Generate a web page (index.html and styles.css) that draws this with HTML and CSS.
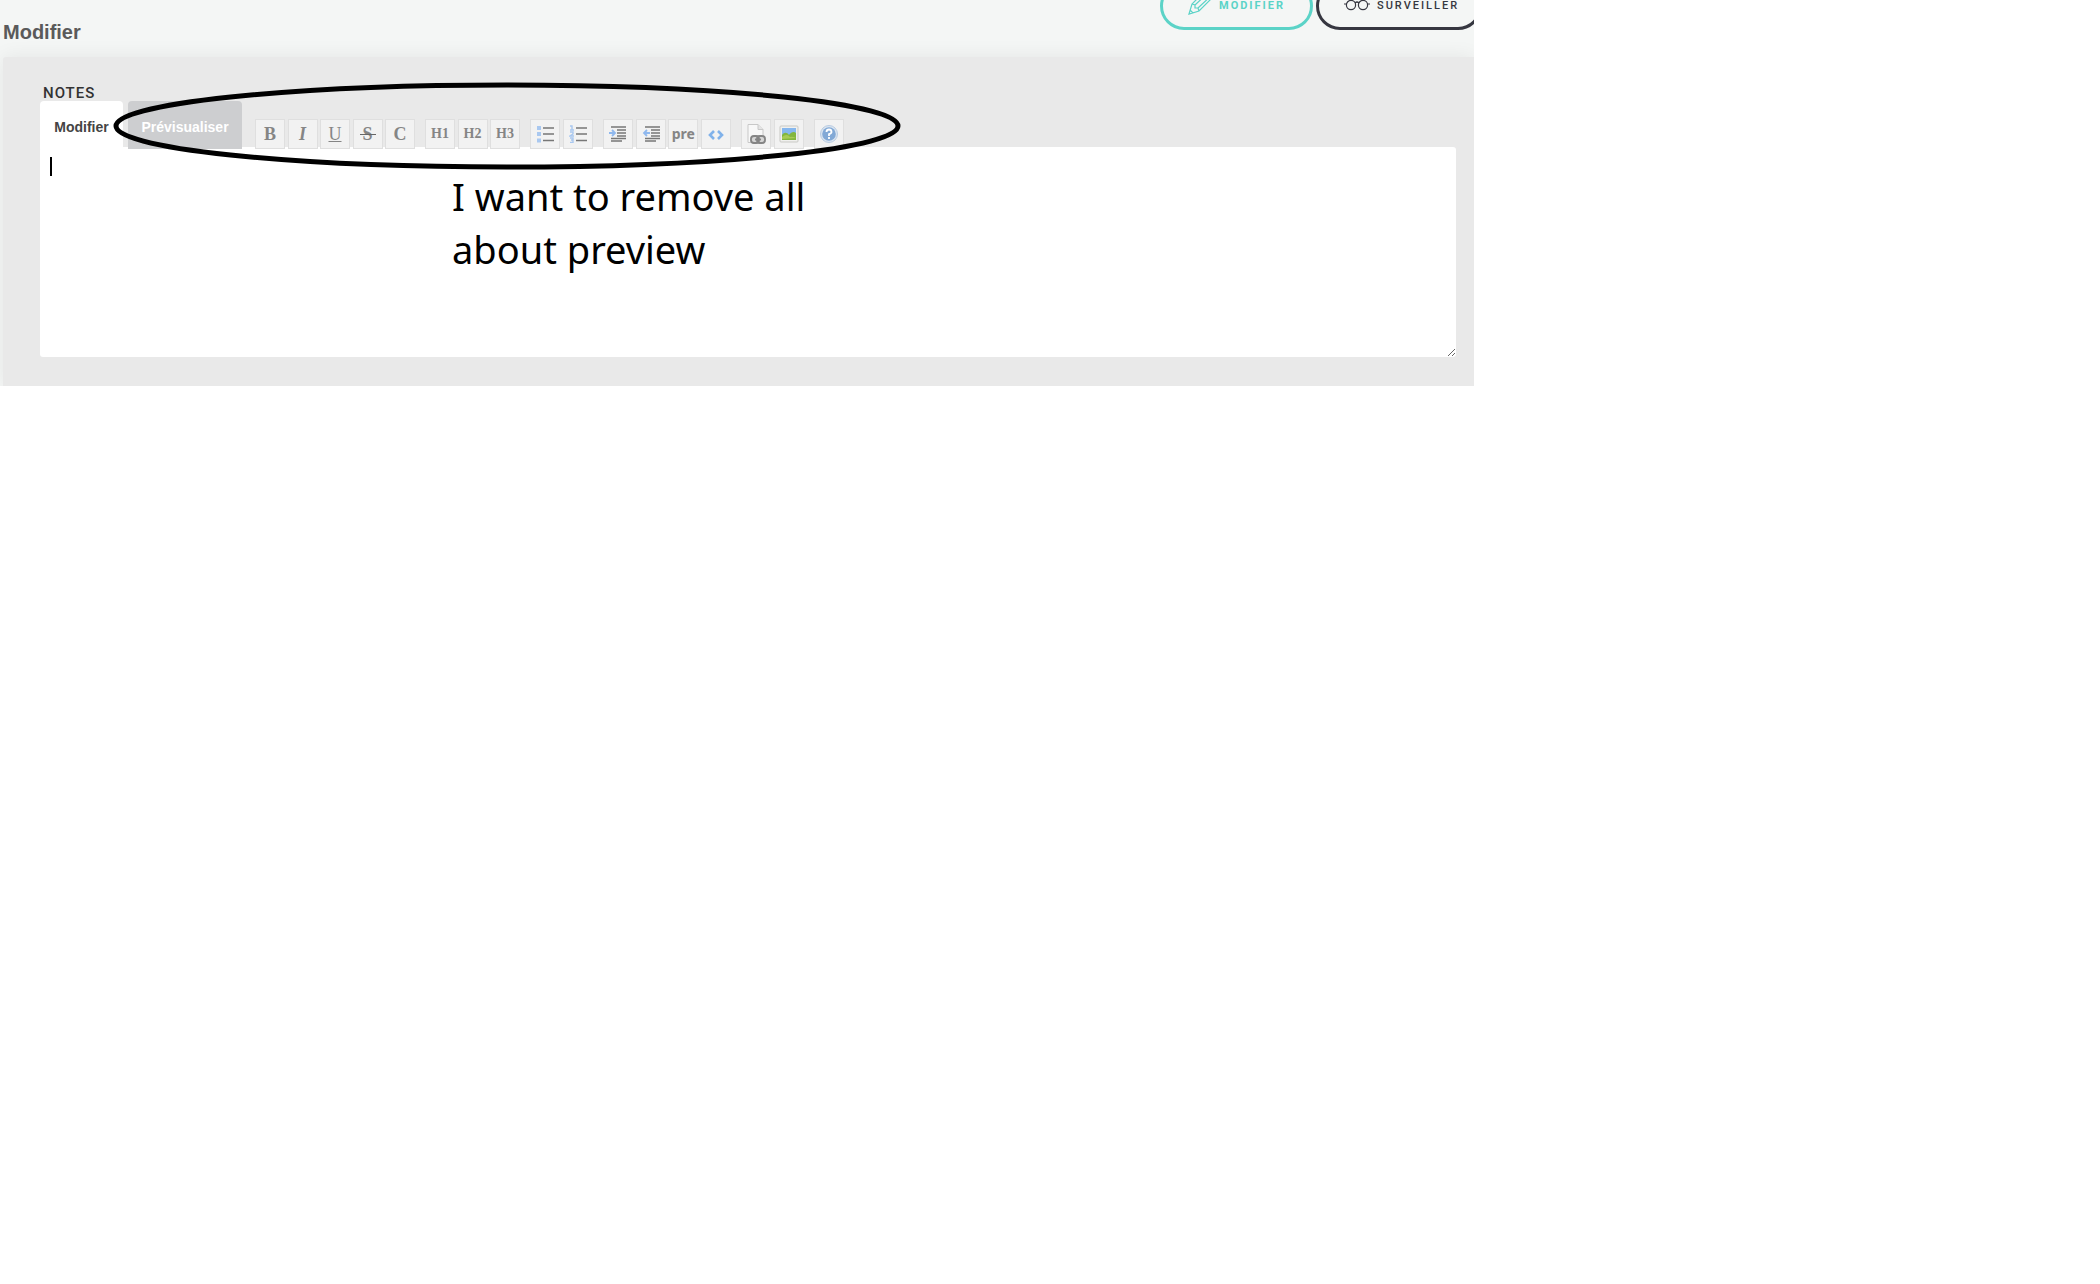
FILE: index.html
```html
<!DOCTYPE html>
<html lang="fr">
<head>
<meta charset="utf-8">
<title>Modifier</title>
<link rel="stylesheet" href="styles.css">
</head>
<body>
<main class="app">
  <header class="header">
    <h1 class="title">Modifier</h1>
    <nav class="actions">
      <button class="action action-edit" type="button">
        <svg width="28" height="28" viewBox="0 0 28 28" fill="none" stroke="currentColor" stroke-width="1.2"><path d="M2 26l3-10L20 1l7 7-15 15zM5 16l3 1v3h3l1 3M8 17L23 3M11 20L26 6M3 22l3 3"/></svg>
        Modifier
      </button>
      <button class="action action-watch" type="button">
        <svg width="26" height="12" viewBox="0 0 26 12" fill="none" stroke="currentColor" stroke-width="1.2"><circle cx="7" cy="6" r="4.6"/><circle cx="19" cy="6" r="4.6"/><path d="M11 4q2-2 4 0M0 5h2.500M23.500 5H26"/></svg>
        Surveiller
      </button>
    </nav>
  </header>
  <section class="panel">
    <label class="label" for="notes">NOTES</label>
    <div class="bar">
      <button class="tab tab-active" type="button">Modifier</button>
      <button class="tab tab-preview" type="button">Prévisualiser</button>
      <div class="tools">
        <div class="group group-five">
          <button class="tool bold" type="button">B</button>
          <button class="tool italic" type="button">I</button>
          <button class="tool underline" type="button">U</button>
          <button class="tool strike" type="button">S</button>
          <button class="tool bold" type="button">C</button>
        </div>
        <div class="group group-three">
          <button class="tool heading" type="button">H1</button>
          <button class="tool heading" type="button">H2</button>
          <button class="tool heading" type="button">H3</button>
        </div>
        <div class="group group-two">
          <button class="tool" type="button" aria-label="Liste à puces"><svg width="18" height="18" viewBox="0 0 18 18"><path stroke="#777" stroke-width="1.4" d="M7 3h11M7 9h11M7 15.500h11"/><path fill="#a9c8f0" d="M1 1h4v4H1zM1 7h4v4H1zM1 13.500h4v4H1z"/></svg></button>
          <button class="tool" type="button" aria-label="Liste numérotée"><svg width="18" height="18" viewBox="0 0 18 18"><path stroke="#777" stroke-width="1.400" d="M7 3h11M7 9h11M7 15.500h11"/><path fill="none" stroke="#a9c8f0" stroke-width="1.400" d="M1 1h2v4M1 5h4M1 7h3v2L1 11h4M1 13h3v2H2h2v2.500H1"/></svg></button>
        </div>
        <div class="group group-four">
          <button class="tool" type="button" aria-label="Citer"><svg width="18" height="18" viewBox="0 0 18 18"><path stroke="#777" stroke-width="1.600" d="M2 2h15M8 5h9M8 8h9M8 11h9M2 13.500h15M2 16h11"/><path fill="none" stroke="#8fb8ee" stroke-width="1.800" d="M0 8h6M3 5l3 3-3 3"/></svg></button>
          <button class="tool" type="button" aria-label="Retirer la citation"><svg width="18" height="18" viewBox="0 0 18 18"><path stroke="#777" stroke-width="1.600" d="M3 2h15M9 5h9M9 8h9M9 11h9M3 13.500h15M3 16h11"/><path fill="none" stroke="#8fb8ee" stroke-width="1.800" d="M2 8h6M5 5L2 8l3 3"/></svg></button>
          <button class="tool pre" type="button">pre</button>
          <button class="tool" type="button" aria-label="Code"><svg width="18" height="18" viewBox="0 0 18 18" fill="none" stroke="#80b2ea" stroke-width="2.600"><path d="M7 6L3 10l4 4M11 6l4 4-4 4"/></svg></button>
        </div>
        <div class="group group-two">
          <button class="tool" type="button" aria-label="Lien"><svg width="20" height="22" viewBox="0 0 20 22"><path fill="#f8f8f8" stroke="#c8c8c8" d="M2 1.500h10l5 5v13H2z"/><path fill="#e4e4e4" stroke="#c8c8c8" d="M12 1.500v5h5"/><rect x="4" y="12" width="16" height="9" rx="4.500" fill="#d5d5d5"/><g fill="none" stroke="#858585" stroke-width="1.800"><rect x="5" y="13" width="8" height="7" rx="3"/><rect x="11" y="13" width="8" height="7" rx="3"/><path d="M9 16.500h6"/></g></svg></button>
          <button class="tool" type="button" aria-label="Image"><svg width="20" height="18" viewBox="0 0 20 18"><rect x="1" y="1" width="18" height="16" rx="1" fill="#f0f0ee" stroke="#c9c9c5"/><path fill="#86b7ee" d="M3 3h14v12H3z"/><path fill="#83b63d" d="M3 10C5 7 8 7 10 10C12 7 15 6 17 8V15H3z"/><path fill="#a8cb55" d="M3 12Q8 8 11 12Q13 11 17 13L3 14z"/></svg></button>
        </div>
        <button class="tool" type="button" aria-label="Aide"><svg width="20" height="20" viewBox="0 0 20 20"><circle cx="10" cy="10" r="8.500" fill="#dbe5f0" stroke="#b9cce2"/><circle cx="10" cy="10" r="6.800" fill="#82a9d6"/><path fill="none" stroke="#fff" stroke-width="1.800" d="M7.500 8q0-2.500 2.500-2.500T12.500 8q0 1.500-2.500 2.200V12M10 13v2"/></svg></button>
      </div>
    </div>
    <div class="editor">
      <textarea class="notes" id="notes"></textarea>
      <span class="caret"></span>
    </div>
  </section>
  <svg class="ring" width="788" height="90" viewBox="0 0 788 90" fill="none" stroke="#000" stroke-width="5"><ellipse cx="394" cy="44" rx="391" ry="41"/></svg>
  <p class="remark">I want to remove all<br>about preview</p>
</main>
</body>
</html>
```
FILE: styles.css
```css
* { box-sizing: border-box; }
body { margin: 0; background: #fff; font-family: "Liberation Sans", Arial, sans-serif; }
button { font: inherit; margin: 0; padding: 0; cursor: pointer; }
.app { position: relative; max-width: 1474px; overflow: hidden; background: #f4f6f5; }
.header { display: flex; justify-content: space-between; align-items: flex-start; height: 57px; padding-left: 3px; }
.title { margin: 20px 0 0; font-size: 20px; line-height: 24px; color: #5a5a5a; }
.actions { display: flex; gap: 3px; margin: -18px -8px 0 0; }
.action { display: flex; align-items: center; height: 48px; border: 3px solid; border-radius: 24px; background: transparent; font: 700 11px/16px Roboto, sans-serif; letter-spacing: 2px; text-transform: uppercase; white-space: nowrap; }
.action-edit { width: 153px; padding-left: 24px; gap: 4px; color: #5bd3c7; }
.action-edit svg { margin-bottom: 8px; }
.action-watch { width: 166px; padding-left: 25px; gap: 7px; color: #363740; font-weight: 500; }
.action-watch svg { margin-bottom: 2px; }
.panel { margin-left: 3px; padding: 26px 18px 29px 37px; border-radius: 3px 0 0 0; background: #e9e9e9; box-shadow: 0 0 20px rgba(0, 0, 0, 0.07); }
.label { display: block; height: 18px; padding-left: 3px; font: 500 15px/20px Roboto, sans-serif; letter-spacing: 1px; color: #333; }
.bar { position: relative; z-index: 1; display: flex; align-items: flex-end; height: 48px; margin-bottom: -2px; }
.tab { height: 48px; border: 0; border-radius: 4px 4px 0 0; font-size: 14px; font-weight: 700; line-height: 20px; padding-top: 4px; }
.tab-active { width: 83px; background: #fff; color: #444; }
.tab-preview { width: 114px; margin-left: 5px; background: #cdced0; color: #fff; }
.tools { display: flex; gap: 10px; margin-left: 13px; }
.group { display: flex; justify-content: space-between; }
.group-five { width: 160px; }
.group-three { width: 95px; }
.group-two { width: 63px; }
.group-four { width: 128px; }
.tool { display: flex; align-items: center; justify-content: center; width: 30px; height: 30px; border: 1px solid #dfdfdf; background: #f2f2f2; color: #858585; font: 400 18px/20px "Liberation Serif", serif; }
.bold { font-weight: 700; }
.italic { font-style: italic; font-weight: 700; }
.underline { text-decoration: underline; }
.strike { position: relative; font-weight: 700; }
.strike::after { content: ""; position: absolute; top: 14px; left: 6px; width: 16px; height: 1px; background: #666; }
.heading { font-size: 14px; font-weight: 700; }
.pre { font: 700 14px/16px "Noto Sans", sans-serif; }
.editor { position: relative; }
.notes { display: block; width: 100%; height: 210px; padding: 8px 10px; border: 0; border-radius: 3px; outline: 0; background: #fff; resize: vertical; font: 400 16px/24px "Liberation Sans", sans-serif; }
.caret { position: absolute; top: 10px; left: 10px; width: 2px; height: 19px; background: #000; }
.ring { position: absolute; z-index: 2; top: 82px; left: 113px; }
.remark { position: absolute; z-index: 2; top: 170px; left: 452px; margin: 0; font: 400 38px/53px "Noto Sans", sans-serif; color: #000; white-space: nowrap; }
```
